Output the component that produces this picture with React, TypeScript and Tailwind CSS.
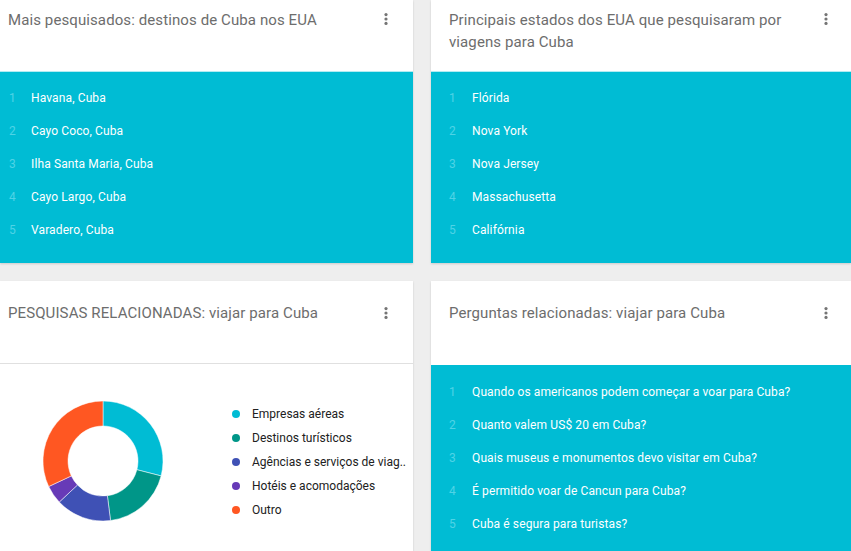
import React from 'react';

const MoreIcon: React.FC = () => (
    <svg width="4" height="12" viewBox="0 0 4 12" className="shrink-0">
        <circle cx="2" cy="1.6" r="1.6" fill="#757575" />
        <circle cx="2" cy="6" r="1.6" fill="#757575" />
        <circle cx="2" cy="10.4" r="1.6" fill="#757575" />
    </svg>
);

const font = { fontFamily: "Roboto, 'Liberation Sans', sans-serif" };

type Slice = { label: string; value: number; color: string };

const slices: Slice[] = [
    { label: 'Empresas aéreas', value: 29, color: '#00bcd4' },
    { label: 'Destinos turísticos', value: 19, color: '#009688' },
    { label: 'Agências e serviços de viag..', value: 15, color: '#3f51b5' },
    { label: 'Hotéis e acomodações', value: 5, color: '#673ab7' },
    { label: 'Outro', value: 32, color: '#ff5722' },
];

const Donut: React.FC = () => {
    const cx = 61, cy = 61, ro = 60, ri = 35;
    let start = 0;
    const pt = (a: number, r: number) => {
        const rad = (a - 90) * Math.PI / 180;
        return [cx + r * Math.cos(rad), cy + r * Math.sin(rad)];
    };
    return (
        <svg width="122" height="122" viewBox="0 0 122 122">
            {slices.map((s) => {
                const a0 = start;
                const a1 = start + (s.value / 100) * 360;
                start = a1;
                const large = a1 - a0 > 180 ? 1 : 0;
                const [x0, y0] = pt(a0, ro);
                const [x1, y1] = pt(a1, ro);
                const [x2, y2] = pt(a1, ri);
                const [x3, y3] = pt(a0, ri);
                const d = `M${x0} ${y0} A${ro} ${ro} 0 ${large} 1 ${x1} ${y1} L${x2} ${y2} A${ri} ${ri} 0 ${large} 0 ${x3} ${y3} Z`;
                return <path key={s.label} d={d} fill={s.color} stroke="#fff" strokeWidth={0.5} />;
            })}
        </svg>
    );
};

const RankList: React.FC<{ items: string[]; numX: string; top: string }> = ({ items, numX, top }) => (
    <ol className={`flex flex-col ${top}`}>
        {items.map((item, i) => (
            <li key={i} className="flex items-center h-[33px] text-[12px]">
                <span className={`shrink-0 text-[#4fd3e6] ${numX}`}>{i + 1}</span>
                <span className="text-white tracking-[0.12px]">{item}</span>
            </li>
        ))}
    </ol>
);

export default function App() {
    return (
        <div className="w-[851px] h-[551px] overflow-hidden bg-[#eeeeee]" style={font}>
            <div className="flex gap-[18px] h-full">
                {/* Left column */}
                <div className="w-[413px] shrink-0 flex flex-col gap-[18px]">
                    <div className="h-[263px] bg-white shadow-[0_1px_2px_rgba(0,0,0,0.15)] flex flex-col">
                        <div className="h-[72px] flex items-start justify-between pl-2 pr-[25px] pt-[9px] border-b border-[#b2ebf2]">
                            <h2 className="text-[15px] leading-[22px] tracking-[0.1px] text-[#6d6d6d]">Mais pesquisados: destinos de Cuba nos EUA</h2>
                            <div className="pt-[4px]"><MoreIcon /></div>
                        </div>
                        <div className="flex-1 bg-[#00bcd4]">
                            <RankList
                                top="pt-[9px]"
                                numX="w-[31px] pl-[9px]"
                                items={['Havana, Cuba', 'Cayo Coco, Cuba', 'Ilha Santa Maria, Cuba', 'Cayo Largo, Cuba', 'Varadero, Cuba']}
                            />
                        </div>
                    </div>
                    <div className="flex-1 bg-white shadow-[0_1px_2px_rgba(0,0,0,0.15)] flex flex-col">
                        <div className="h-[83px] flex items-start justify-between pl-2 pr-[25px] pt-[21px] border-b border-[#e0e0e0]">
                            <h2 className="text-[15px] leading-[22px] tracking-[0.1px] text-[#6d6d6d]">PESQUISAS RELACIONADAS: viajar para Cuba</h2>
                            <div className="pt-[5px]"><MoreIcon /></div>
                        </div>
                        <div className="flex items-start pt-[36px]">
                            <div className="pl-[42px] pr-[68px]"><Donut /></div>
                            <ul className="flex flex-col pt-[2px]">
                                {slices.map((s) => (
                                    <li key={s.label} className="flex items-center h-[24px] text-[12px] text-[#212121] whitespace-nowrap">
                                        <span className="w-[8px] h-[8px] rounded-full mr-[12px]" style={{ backgroundColor: s.color }} />
                                        {s.label}
                                    </li>
                                ))}
                            </ul>
                        </div>
                    </div>
                </div>
                {/* Right column */}
                <div className="flex-1 flex flex-col gap-[18px]">
                    <div className="h-[263px] bg-white shadow-[0_1px_2px_rgba(0,0,0,0.15)] flex flex-col">
                        <div className="h-[72px] flex items-start justify-between pl-[18px] pr-[23px] pt-[9px] border-b border-[#b2ebf2]">
                            <h2 className="text-[15px] leading-[22px] tracking-[0.1px] text-[#6d6d6d] w-[350px]">Principais estados dos EUA que pesquisaram por viagens para Cuba</h2>
                            <div className="pt-[4px]"><MoreIcon /></div>
                        </div>
                        <div className="flex-1 bg-[#00bcd4]">
                            <RankList
                                top="pt-[9px]"
                                numX="w-[41px] pl-[18px]"
                                items={['Flórida', 'Nova York', 'Nova Jersey', 'Massachusetta', 'Califórnia']}
                            />
                        </div>
                    </div>
                    <div className="flex-1 bg-white shadow-[0_1px_2px_rgba(0,0,0,0.15)] flex flex-col">
                        <div className="h-[84px] flex items-start justify-between pl-[18px] pr-[23px] pt-[21px]">
                            <h2 className="text-[15px] leading-[22px] tracking-[0.1px] text-[#6d6d6d]">Perguntas relacionadas: viajar para Cuba</h2>
                            <div className="pt-[5px]"><MoreIcon /></div>
                        </div>
                        <div className="flex-1 bg-[#00bcd4]">
                            <RankList
                                top="pt-[10px]"
                                numX="w-[41px] pl-[18px]"
                                items={['Quando os americanos podem começar a voar para Cuba?', 'Quanto valem US$ 20 em Cuba?', 'Quais museus e monumentos devo visitar em Cuba?', 'É permitido voar de Cancun para Cuba?', 'Cuba é segura para turistas?']}
                            />
                        </div>
                    </div>
                </div>
            </div>
        </div>
    );
}
